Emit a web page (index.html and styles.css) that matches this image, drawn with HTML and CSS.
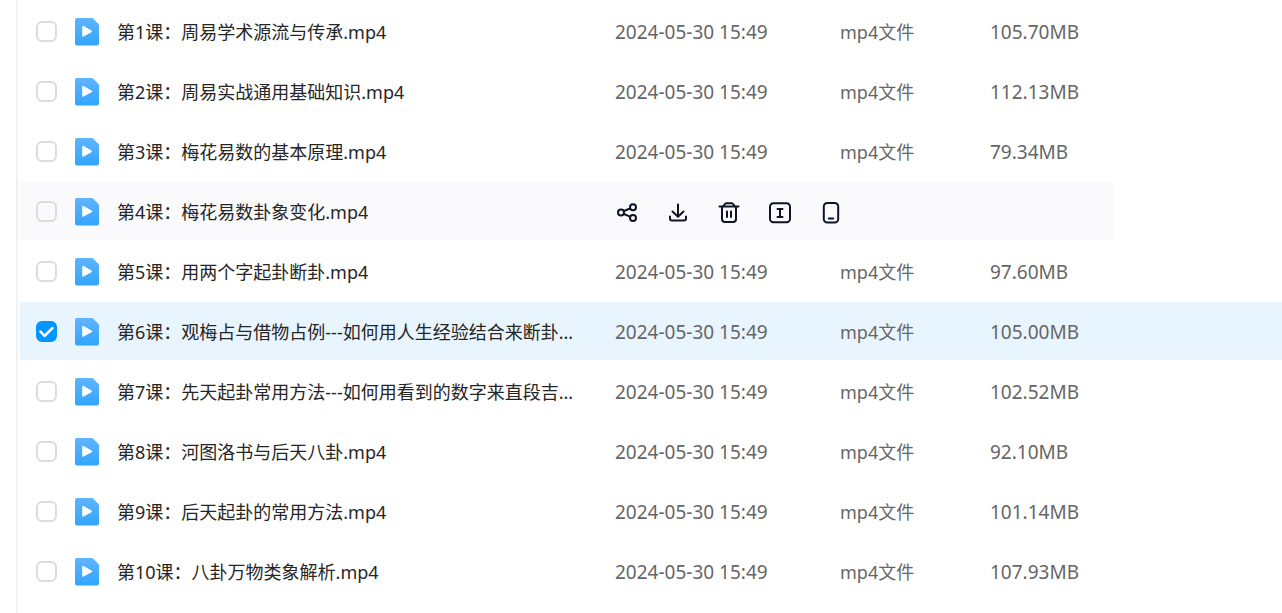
FILE: index.html
```html
<!DOCTYPE html>
<html lang="zh-CN">
<head>
    <meta charset="UTF-8">
    <meta name="viewport" content="width=device-width, initial-scale=1.0">
    <title>文件列表</title>
    <link rel="stylesheet" href="styles.css">
</head>
<body>

    <!-- Iconos compartidos -->
    <svg class="sprite" aria-hidden="true">
        <defs>
            <linearGradient id="azul" x1="0" y1="0" x2="0" y2="1">
                <stop offset="0" stop-color="#5fb4ff"/>
                <stop offset="1" stop-color="#31a5ff"/>
            </linearGradient>
        </defs>
        <symbol id="video" viewBox="0 0 24 28">
            <path d="M2 0H17.500L24 6.500V25.500a2 2 0 0 1-2 2H2a2 2 0 0 1-2-2V2a2 2 0 0 1 2-2z" fill="url(#azul)"/>
            <path d="M7.200 9c0-.9.800-1.300 1.500-.9l7.700 4.500c.7.400.7 1.200 0 1.600l-7.700 4.400c-.7.400-1.500 0-1.500-.9z" fill="#fff"/>
        </symbol>
    </svg>

    <main class="panel">
        <table class="archivos">
            <colgroup>
                <col class="col-check">
                <col class="col-nombre">
                <col class="col-fecha">
                <col class="col-tipo">
                <col class="col-peso">
                <col class="col-resto">
            </colgroup>
            <tbody>
                <tr>
                    <td class="check"><input type="checkbox" id="f1"></td>
                    <td><label class="nombre" for="f1"><svg class="icono"><use href="#video"/></svg><span>第1课：周易学术源流与传承.mp4</span></label></td>
                    <td class="dato">2024-05-30 15:49</td>
                    <td class="tipo">mp4文件</td>
                    <td class="dato">105.70MB</td>
                    <td></td>
                </tr>
                <tr>
                    <td class="check"><input type="checkbox" id="f2"></td>
                    <td><label class="nombre" for="f2"><svg class="icono"><use href="#video"/></svg><span>第2课：周易实战通用基础知识.mp4</span></label></td>
                    <td class="dato">2024-05-30 15:49</td>
                    <td class="tipo">mp4文件</td>
                    <td class="dato">112.13MB</td>
                    <td></td>
                </tr>
                <tr>
                    <td class="check"><input type="checkbox" id="f3"></td>
                    <td><label class="nombre" for="f3"><svg class="icono"><use href="#video"/></svg><span>第3课：梅花易数的基本原理.mp4</span></label></td>
                    <td class="dato">2024-05-30 15:49</td>
                    <td class="tipo">mp4文件</td>
                    <td class="dato">79.34MB</td>
                    <td></td>
                </tr>
                <!-- Fila activa con acciones -->
                <tr class="activa">
                    <td class="check"><input type="checkbox" id="f4"></td>
                    <td><label class="nombre" for="f4"><svg class="icono"><use href="#video"/></svg><span>第4课：梅花易数卦象变化.mp4</span></label></td>
                    <td colspan="3">
                        <div class="acciones">
                            <button type="button" aria-label="分享">
                                <svg viewBox="0 0 24 24"><circle cx="6" cy="12.500" r="3"/><circle cx="18" cy="7.200" r="3"/><circle cx="18" cy="18" r="3"/><path d="M9 11l6-2.500M9 14l6 2.600"/></svg>
                            </button>
                            <button type="button" aria-label="下载">
                                <svg viewBox="0 0 24 24"><path d="M12 4.500v12M6.500 11.500l5.500 5.200 5.500-5.200M4 16.500v2a2 2 0 0 0 2 2h12a2 2 0 0 0 2-2v-2"/></svg>
                            </button>
                            <button type="button" aria-label="删除">
                                <svg viewBox="0 0 24 24"><path d="M2.500 6.500h19M5 6.500v12.500a3 3 0 0 0 3 3h8a3 3 0 0 0 3-3V6.500M6 6.500l1.500-2c.5-.8 1.200-1.200 2-1.200h5c.8 0 1.500.4 2 1.200l1.500 2M10 11.500v5.500M14 11.500v5.500"/></svg>
                            </button>
                            <button type="button" aria-label="重命名">
                                <svg viewBox="0 0 24 24"><rect x="2" y="3.300" width="20" height="19" rx="3.500"/><path d="M9.500 9h5M9.500 17h5M12 9v8"/></svg>
                            </button>
                            <button type="button" aria-label="发送到手机">
                                <svg viewBox="0 0 24 24"><rect x="4.800" y="3" width="14.400" height="19.500" rx="3.500"/><path d="M9.800 18.500h4.500"/></svg>
                            </button>
                        </div>
                    </td>
                    <td></td>
                </tr>
                <tr>
                    <td class="check"><input type="checkbox" id="f5"></td>
                    <td><label class="nombre" for="f5"><svg class="icono"><use href="#video"/></svg><span>第5课：用两个字起卦断卦.mp4</span></label></td>
                    <td class="dato">2024-05-30 15:49</td>
                    <td class="tipo">mp4文件</td>
                    <td class="dato">97.60MB</td>
                    <td></td>
                </tr>
                <tr class="elegida">
                    <td class="check"><input type="checkbox" id="f6" checked></td>
                    <td><label class="nombre" for="f6"><svg class="icono"><use href="#video"/></svg><span>第6课：观梅占与借物占例---如何用人生经验结合来断卦...</span></label></td>
                    <td class="dato">2024-05-30 15:49</td>
                    <td class="tipo">mp4文件</td>
                    <td class="dato">105.00MB</td>
                    <td></td>
                </tr>
                <tr>
                    <td class="check"><input type="checkbox" id="f7"></td>
                    <td><label class="nombre" for="f7"><svg class="icono"><use href="#video"/></svg><span>第7课：先天起卦常用方法---如何用看到的数字来直段吉...</span></label></td>
                    <td class="dato">2024-05-30 15:49</td>
                    <td class="tipo">mp4文件</td>
                    <td class="dato">102.52MB</td>
                    <td></td>
                </tr>
                <tr>
                    <td class="check"><input type="checkbox" id="f8"></td>
                    <td><label class="nombre" for="f8"><svg class="icono"><use href="#video"/></svg><span>第8课：河图洛书与后天八卦.mp4</span></label></td>
                    <td class="dato">2024-05-30 15:49</td>
                    <td class="tipo">mp4文件</td>
                    <td class="dato">92.10MB</td>
                    <td></td>
                </tr>
                <tr>
                    <td class="check"><input type="checkbox" id="f9"></td>
                    <td><label class="nombre" for="f9"><svg class="icono"><use href="#video"/></svg><span>第9课：后天起卦的常用方法.mp4</span></label></td>
                    <td class="dato">2024-05-30 15:49</td>
                    <td class="tipo">mp4文件</td>
                    <td class="dato">101.14MB</td>
                    <td></td>
                </tr>
                <tr>
                    <td class="check"><input type="checkbox" id="f10"></td>
                    <td><label class="nombre" for="f10"><svg class="icono"><use href="#video"/></svg><span>第10课：八卦万物类象解析.mp4</span></label></td>
                    <td class="dato">2024-05-30 15:49</td>
                    <td class="tipo">mp4文件</td>
                    <td class="dato">107.93MB</td>
                    <td></td>
                </tr>
            </tbody>
        </table>
    </main>

</body>
</html>
```
FILE: styles.css
```css
/* Paleta de colores */
:root {
    --color-texto: #262626;
    --color-dato: #666;
    --color-borde: #dcdcdc;
    --color-linea: #f1f1f1;
    --color-activa: #fafafc;
    --color-elegida: #e8f5fe;
    --color-primario: #0095ff;
    --color-accion: #0d1426;
}

/* Configuración global */
* {
    box-sizing: border-box;
}

body {
    margin: 0;
    background-color: #fff;
    color: var(--color-texto);
    font-family: "Noto Sans", "Noto Sans CJK SC", sans-serif;
    font-size: 18px;
    line-height: 26px;
}

.sprite {
    position: absolute;
    width: 0;
    height: 0;
}

.panel {
    min-height: 100vh;
    margin-left: 16px;
    padding-left: 2px;
    border-left: 2px solid var(--color-linea);
}

/* Tabla de archivos */
.archivos {
    width: 100%;
    table-layout: fixed;
    border-collapse: separate;
    border-spacing: 0 2px;
}

.col-check { width: 55px; }
.col-fecha { width: 225px; }
.col-tipo { width: 150px; }
.col-peso { width: 123px; }
.col-resto { width: 169px; }

.archivos td {
    height: 58px;
    padding: 2px 0 0;
    vertical-align: middle;
    white-space: nowrap;
}

.archivos .check {
    padding: 0 0 0 16px;
}

.activa td:not(:last-child) {
    background-color: var(--color-activa);
}

.elegida td {
    background-color: var(--color-elegida);
}

.nombre {
    display: flex;
    align-items: center;
    gap: 18px;
    padding-right: 24px;
}

.nombre span {
    overflow: hidden;
    text-overflow: ellipsis;
}

.icono {
    flex: none;
    width: 24px;
    height: 28px;
}

.dato,
.tipo {
    color: var(--color-dato);
}

.dato {
    font-size: 19px;
}

/* Casillas */
input[type="checkbox"] {
    appearance: none;
    display: block;
    width: 21px;
    height: 21px;
    margin: 0;
    border: 2px solid var(--color-borde);
    border-radius: 6px;
    cursor: pointer;
}

input[type="checkbox"]:checked {
    border-color: var(--color-primario);
    background: var(--color-primario) url("data:image/svg+xml,%3Csvg xmlns='http://www.w3.org/2000/svg' viewBox='0 0 17 17'%3E%3Cpath d='M2.500 8.500l4 4.500 8-8' fill='none' stroke='white' stroke-width='2.500' stroke-linecap='round' stroke-linejoin='round'/%3E%3C/svg%3E") center / 17px no-repeat;
}

/* Acciones */
.acciones {
    display: flex;
    gap: 27px;
}

.acciones button {
    width: 24px;
    height: 24px;
    padding: 0;
    border: none;
    background: none;
    cursor: pointer;
}

.acciones svg {
    display: block;
    width: 24px;
    height: 24px;
    fill: none;
    stroke: var(--color-accion);
    stroke-width: 2;
    stroke-linecap: round;
    stroke-linejoin: round;
}
```
